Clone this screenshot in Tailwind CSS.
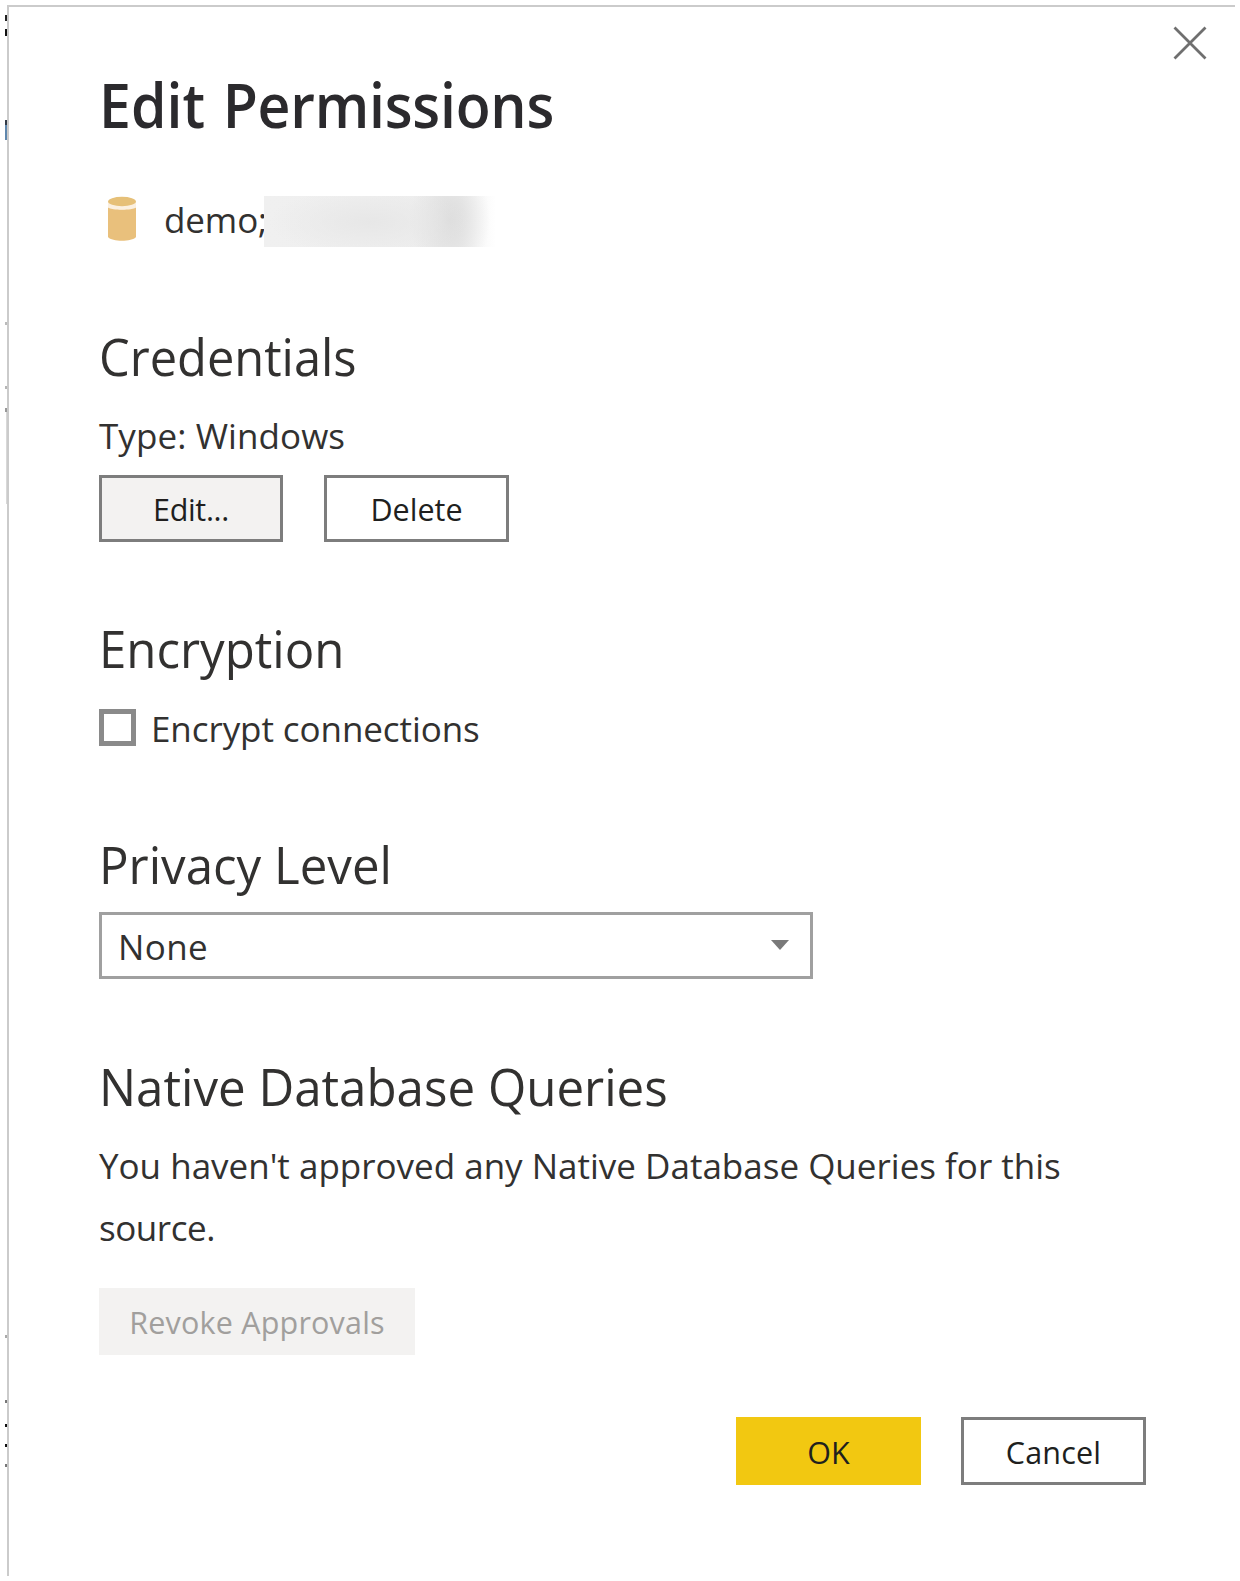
<!DOCTYPE html>
<html lang="en">
<head>
<meta charset="utf-8">
<title>Edit Permissions</title>
<script src="https://cdn.jsdelivr.net/npm/@tailwindcss/browser@4"></script>
</head>
<body class="relative h-[1581px] w-[1240px] overflow-hidden bg-white pl-[7px] pt-[5px] font-['Open_Sans',sans-serif] text-[#323130]">
  <!-- slivers of the page behind the dialog -->
  <div class="absolute left-[5px] top-[15px] h-[6px] w-[2px] bg-[#222]"></div>
  <div class="absolute left-[5px] top-[29px] h-[7px] w-[2px] bg-[#111]"></div>
  <div class="absolute left-[5px] top-[120px] h-[20px] w-[2px] bg-[#5f87ad]"></div>
  <div class="absolute left-[5px] top-[120px] h-[5px] w-[2px] bg-[#333c48]"></div>
  <div class="absolute left-[5px] top-[322px] h-[3px] w-[3px] bg-[#bbb]"></div>
  <div class="absolute left-[5px] top-[386px] h-[3px] w-[3px] bg-[#b5b5b5]"></div>
  <div class="absolute left-[5px] top-[408px] h-[4px] w-[3px] bg-[#999]"></div>
  <div class="absolute left-[6px] top-[412px] h-[92px] w-px bg-[#d8d8d8]"></div>
  <div class="absolute left-[5px] top-[1335px] h-[3px] w-[3px] bg-[#aaa]"></div>
  <div class="absolute left-[5px] top-[1400px] h-[3px] w-[3px] bg-[#777]"></div>
  <div class="absolute left-[5px] top-[1424px] h-[3px] w-[3px] bg-[#111]"></div>
  <div class="absolute left-[5px] top-[1444px] h-[3px] w-[3px] bg-[#111]"></div>
  <div class="absolute left-[5px] top-[1464px] h-[3px] w-[3px] bg-[#777]"></div>

  <main class="relative flex h-[1571px] w-[1228px] flex-col border-l-2 border-t-2 border-[#cbcbcb] pl-[90px] pt-[65px]">
    <button class="absolute right-[28px] top-[19px] size-[34px]" aria-label="Close">
      <svg viewBox="0 0 34 34" class="size-full" fill="none" stroke="#6f6f6f" stroke-width="2.8"><path d="M1.500 1.500 32.500 32.500M32.500 1.500 1.500 32.500"/></svg>
    </button>

    <h1 class="h-16 origin-left scale-x-[0.922] whitespace-nowrap text-[62px]/[64px] font-semibold text-[#2b2a2d]">Edit <span class="ml-[3px] tracking-[-0.25px]">Permissions</span></h1>

    <div class="mt-[60px] flex h-[52px] items-start">
      <svg viewBox="0 0 30 46" class="ml-2 h-[46px] w-[30px]">
        <path d="M1 11C5 14 25 14 29 11V41C25 46 5 46 1 41Z" fill="#e9c07c"/>
        <path d="M1 6.500V11.500C5 14.500 25 14.500 29 11.500V6.500Z" fill="#fbf0e0"/>
        <ellipse cx="15" cy="5.500" rx="14" ry="4.700" fill="#e6c078"/>
      </svg>
      <div class="ml-[27px] mt-1 w-[100px] whitespace-nowrap text-[35px]/[40px] tracking-[-0.1px]">demo;</div>
      <div class="z-10 h-[51px] w-[236px] bg-[radial-gradient(ellipse_100px_34px_at_105px_26px,#e7e7e7,transparent),radial-gradient(ellipse_40px_60px_at_186px_24px,#dcdcdc,transparent),linear-gradient(to_right,#f0f0f0_0,#eeeeee_195px,#f8f8f8_214px,#ffffff_232px)]"></div>
    </div>

    <section class="mt-[80px]">
      <h2 class="h-14 origin-left scale-x-[0.938] whitespace-nowrap text-[52px]/[56px]">Credentials</h2>
      <p class="mt-[32px] text-[35px]/[40px] tracking-[0.08px]">Type: Windows</p>
      <div class="mt-[19px] flex gap-[41px] text-[30.5px] text-[#201f1e]">
        <button class="h-[67px] w-[184px] border-3 border-[#7d7d7d] bg-[#f3f2f1] pt-[3px] tracking-[-0.35px]">Edit...</button>
        <button class="h-[67px] w-[185px] border-3 border-[#7d7d7d] bg-white pt-[3px]">Delete</button>
      </div>
    </section>

    <section class="mt-[78px]">
      <h2 class="h-14 origin-left scale-x-[0.945] whitespace-nowrap text-[52px]/[56px]">Encryption</h2>
      <label class="mt-8 flex h-10 items-start">
        <span class="mt-px size-[37px] border-5 border-[#8a8a8a] bg-white"></span>
        <span class="ml-[15px] mt-px text-[35px]/[40px] tracking-[-0.08px]">Encrypt connections</span>
      </label>
    </section>

    <section class="mt-[88px]">
      <h2 class="h-14 origin-left scale-x-[0.946] whitespace-nowrap text-[52px]/[56px]">Privacy Level</h2>
      <div class="mt-[20px] flex h-[67px] w-[714px] items-center justify-between border-3 border-[#a0a0a0] pl-4 pr-[21px]">
        <span class="mt-[2px] text-[35px]/[40px] tracking-[0.4px]">None</span>
        <svg viewBox="0 0 18 10" class="-mt-px h-[10px] w-[18px]"><path d="M0 0H18L9 10Z" fill="#797979"/></svg>
      </div>
    </section>

    <section class="mt-[79px]">
      <h2 class="h-14 origin-left scale-x-[0.947] whitespace-nowrap text-[52px]/[56px]">Native Database Queries</h2>
      <p class="mt-[21px] w-[1000px] text-[35px]/[62px]">You haven't approved any Native Database Queries for this <span class="tracking-[-0.45px]">source.</span></p>
      <button class="mt-[29px] h-[67px] w-[316px] bg-[#f3f2f1] pt-[3px] text-[30.5px] tracking-[0.2px] text-[#a19f9d]" disabled>Revoke Approvals</button>
    </section>

    <footer class="mt-[62px] flex justify-end gap-10 pr-[89px] text-[30.5px] text-[#201f1e]">
      <button class="h-[68px] w-[185px] bg-[#f2c811] pt-[3px]">OK</button>
      <button class="h-[68px] w-[185px] border-3 border-[#7d7d7d] bg-white pt-[3px] tracking-[0.2px]">Cancel</button>
    </footer>
  </main>
</body>
</html>
